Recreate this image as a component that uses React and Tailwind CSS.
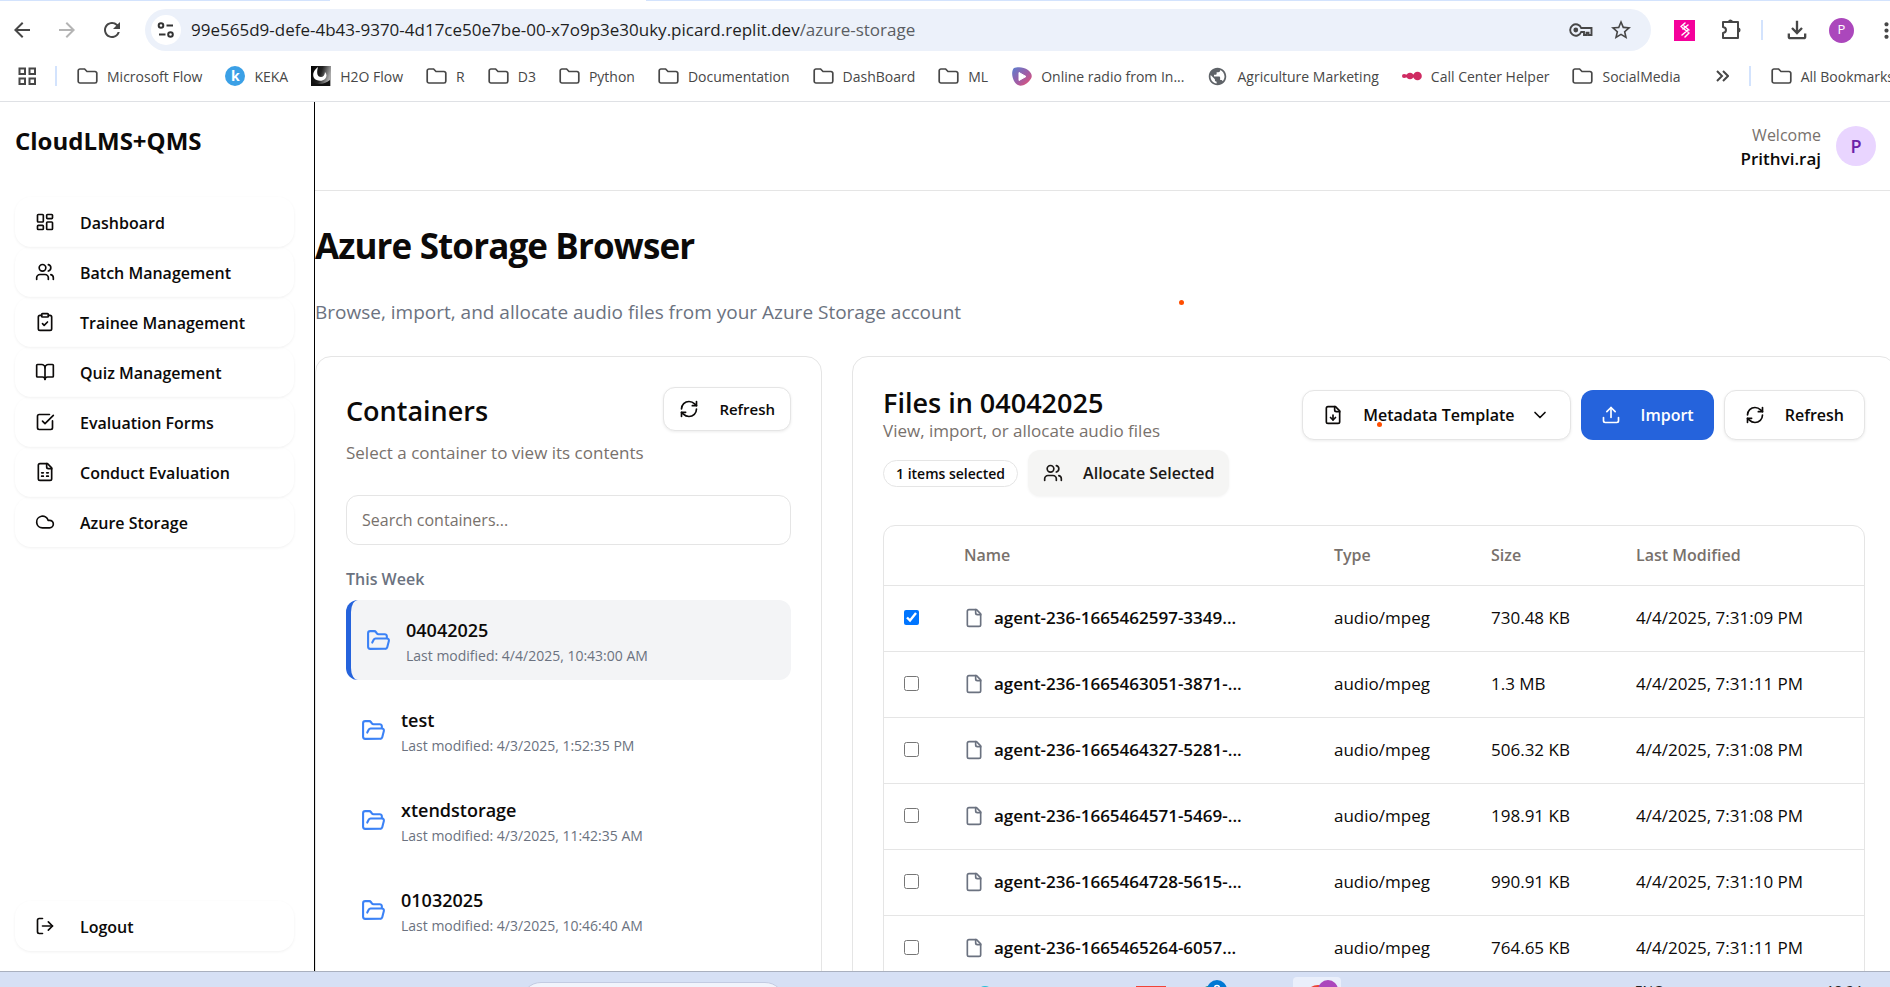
import React, { useState } from "react";
import {
  BookOpen,
  ChevronDown,
  ClipboardCheck,
  Cloud,
  FolderOpen,
  LayoutDashboard,
  LogOut,
  RefreshCw,
  SquareCheckBig,
  Upload,
  Users,
} from "lucide-react";
import {
  MdArrowBack,
  MdArrowForward,
  MdMoreVert,
  MdOutlineExtension,
  MdOutlineFileDownload,
  MdPublic,
  MdRefresh,
  MdStarBorder,
} from "react-icons/md";

/* ---------- icons ---------- */

function LineIcon({ size = 20, className = "", children }) {
  return (
    <svg
      width={size}
      height={size}
      viewBox="0 0 24 24"
      fill="none"
      stroke="currentColor"
      strokeWidth="2"
      strokeLinecap="round"
      strokeLinejoin="round"
      className={`shrink-0 ${className}`}
      aria-hidden="true"
    >
      {children}
    </svg>
  );
}

function FileIcon(props) {
  return (
    <LineIcon {...props}>
      <path d="M15 2H6a2 2 0 0 0-2 2v16a2 2 0 0 0 2 2h12a2 2 0 0 0 2-2V7Z" />
      <path d="M14 2v4a2 2 0 0 0 2 2h4" />
    </LineIcon>
  );
}

function FileDownIcon(props) {
  return (
    <LineIcon {...props}>
      <path d="M15 2H6a2 2 0 0 0-2 2v16a2 2 0 0 0 2 2h12a2 2 0 0 0 2-2V7Z" />
      <path d="M14 2v4a2 2 0 0 0 2 2h4" />
      <path d="M12 18v-6" />
      <path d="m9 15 3 3 3-3" />
    </LineIcon>
  );
}

function FileSheetIcon(props) {
  return (
    <LineIcon {...props}>
      <path d="M15 2H6a2 2 0 0 0-2 2v16a2 2 0 0 0 2 2h12a2 2 0 0 0 2-2V7Z" />
      <path d="M14 2v4a2 2 0 0 0 2 2h4" />
      <path d="M8 13h2M14 13h2M8 17h2M14 17h2" />
    </LineIcon>
  );
}

function BookmarkFolder() {
  return (
    <svg width="21" height="18" viewBox="0 0 21 18" fill="none" className="shrink-0" aria-hidden="true">
      <path
        d="M3 2h4.6l2.4 2.5H18a1.8 1.8 0 0 1 1.8 1.8v8A1.8 1.8 0 0 1 18 16H3a1.8 1.8 0 0 1-1.8-1.8V3.8A1.8 1.8 0 0 1 3 2Z"
        stroke="#474747"
        strokeWidth="1.7"
      />
    </svg>
  );
}

function KekaIcon() {
  return (
    <span className="flex size-5 shrink-0 items-center justify-center rounded-full bg-[#3ba0e6] text-[14px] leading-none font-bold text-white">
      k
    </span>
  );
}

function H2OIcon() {
  return (
    <svg width="20" height="20" viewBox="0 0 20 20" className="shrink-0" aria-hidden="true">
      <defs>
        <linearGradient id="h2o" x1="0" x2="1" y1="0" y2="0.3">
          <stop offset="0" stopColor="#000" />
          <stop offset="0.55" stopColor="#222" />
          <stop offset="1" stopColor="#aaa" />
        </linearGradient>
      </defs>
      <rect width="20" height="20" fill="url(#h2o)" />
      <path d="M7 1C3 4 1 8 3 12c2 3 8 4 11 1 2-2 2-5 0-7 0 3-2 5-4 5-3 0-5-3-3-10Z" fill="#fff" />
      <path d="M1 16c5 3 12 3 18-2v6H1Z" fill="#111" />
    </svg>
  );
}

function RadioIcon() {
  return (
    <svg width="21" height="19" viewBox="0 0 21 19" className="shrink-0" aria-hidden="true">
      <defs>
        <linearGradient id="radio" x1="0" x2="1" y1="0" y2="1">
          <stop offset="0" stopColor="#5a7fd0" />
          <stop offset="0.55" stopColor="#a25ca4" />
          <stop offset="1" stopColor="#f0506e" />
        </linearGradient>
      </defs>
      <path d="M3 1c5-1.500 10-.8 14 2 4 3 5 7 2 10-3 4-8 7-12 5C2 16-1 5 3 1Z" fill="url(#radio)" />
      <path d="M8 5.500v8l7-4Z" fill="#fff" stroke="#fff" strokeWidth="1" strokeLinejoin="round" />
    </svg>
  );
}

function CallCenterIcon() {
  return (
    <svg width="20" height="10" viewBox="0 0 20 10" className="shrink-0" aria-hidden="true">
      <path d="M2 5h14" stroke="#cf2b62" strokeWidth="3" />
      <circle cx="2" cy="5" r="2" fill="#cf2b62" />
      <circle cx="8" cy="5" r="3.200" fill="#cf2b62" />
      <circle cx="15.500" cy="5" r="4.300" fill="#cf2b62" />
    </svg>
  );
}

function AppsIcon() {
  return (
    <svg width="19" height="19" viewBox="0 0 19 19" fill="none" stroke="#474747" strokeWidth="2" className="shrink-0" aria-hidden="true">
      <rect x="1.500" y="1.500" width="5.500" height="5.500" />
      <rect x="11.500" y="1.500" width="5.500" height="5.500" />
      <rect x="1.500" y="11.500" width="5.500" height="5.500" />
      <rect x="11.500" y="11.500" width="5.500" height="5.500" />
    </svg>
  );
}

function TuneIcon() {
  return (
    <svg width="18" height="16" viewBox="0 0 18 16" fill="none" stroke="#333" strokeWidth="2" aria-hidden="true">
      <circle cx="4" cy="3.500" r="2.300" />
      <path d="M9.500 3.500H16" />
      <circle cx="13.500" cy="12.500" r="2.300" />
      <path d="M2 12.500h6.500" />
    </svg>
  );
}

function KeyIcon() {
  return (
    <svg width="24" height="14" viewBox="0 0 24 14" fill="none" stroke="#474747" strokeWidth="1.900" aria-hidden="true">
      <path d="M12.200 5A5.700 5.700 0 1 0 12.200 9H15v3h2.500V9.800h2V12h3V5Z" />
      <circle cx="6.800" cy="7" r="2.400" fill="#474747" stroke="none" />
    </svg>
  );
}

function PuzzleIcon() {
  return (
    <svg width="24" height="24" viewBox="0 0 24 24" fill="none" stroke="#474747" strokeWidth="2" strokeLinejoin="round" aria-hidden="true">
      <path d="M4 4h15v16H4v-5c4-.5 4-5.500 0-6Z" />
      <path d="M9 4a2.500 2.500 0 0 1 5 0ZM19 9.500a2.500 2.500 0 0 1 0 5Z" fill="#474747" stroke="none" />
    </svg>
  );
}

/* ---------- browser chrome ---------- */

const bookmarks = [
  { label: "Microsoft Flow" },
  { label: "KEKA", icon: <KekaIcon /> },
  { label: "H2O Flow", icon: <H2OIcon /> },
  { label: "R" },
  { label: "D3" },
  { label: "Python" },
  { label: "Documentation" },
  { label: "DashBoard" },
  { label: "ML" },
  { label: "Online radio from In...", icon: <RadioIcon /> },
  { label: "Agriculture Marketing", icon: <MdPublic size={21} className="shrink-0 text-[#5f6368]" /> },
  { label: "Call Center Helper", icon: <CallCenterIcon /> },
  { label: "SocialMedia" },
];

function Bookmark({ label, icon }) {
  return (
    <a href="#" className="flex shrink-0 items-center gap-[9px] whitespace-nowrap">
      {icon || <BookmarkFolder />}
      {label}
    </a>
  );
}

function BrowserChrome() {
  return (
    <header className="shrink-0 overflow-hidden border-b border-[#dfe1e5] bg-white text-[#474747]">
      <div className="flex h-px">
        <div className="w-[330px] bg-[#d3e3fd]" />
        <div className="w-[316px]" />
        <div className="flex-1 bg-[#d3e3fd]" />
      </div>
      <div className="-mr-[9px] flex items-center pt-2 pl-[10px]">
        <div className="flex items-center gap-[21px]">
          <button type="button" aria-label="Back"><MdArrowBack size={24} /></button>
          <button type="button" aria-label="Forward" className="text-[#b4b4b4]"><MdArrowForward size={24} /></button>
          <button type="button" aria-label="Reload"><MdRefresh size={24} /></button>
        </div>
        <div className="ml-[21px] flex h-[42px] flex-1 items-center rounded-full bg-[#ecf1fa] pr-[18px] pl-[6px]">
          <button type="button" aria-label="Site information" className="flex size-[30px] items-center justify-center rounded-full bg-white">
            <TuneIcon />
          </button>
          <div className="ml-[10px] flex-1 text-[17px] whitespace-nowrap">
            <span className="text-[#1f1f1f]">99e565d9-defe-4b43-9370-4d17ce50e7be-00-x7o9p3e30uky.picard.replit.dev</span>
            <span className="text-[#5a5d63]">/azure-storage</span>
          </div>
          <div className="flex items-center gap-4">
            <button type="button" aria-label="Passwords"><KeyIcon /></button>
            <button type="button" aria-label="Bookmark this page"><MdStarBorder size={24} /></button>
          </div>
        </div>
        <div className="flex items-center pl-[23px]">
          <button type="button" aria-label="Extension" className="flex size-[21px] items-center justify-center bg-[#f5009b]">
            <svg width="14" height="18" viewBox="0 0 14 18" fill="none" stroke="#fff" strokeWidth="1.500" strokeLinecap="round" aria-hidden="true">
              <path d="M3 5.500 7 2M5 8 10 4M4 6.500l6 4.500M6 5l5 4M4 14l6-5M7 16l4-4" />
            </svg>
          </button>
          <button type="button" aria-label="Extensions" className="ml-6"><PuzzleIcon /></button>
          <div className="ml-[18px] h-5 w-0.5 bg-[#d3e3fd]" />
          <button type="button" aria-label="Downloads" className="ml-5"><MdOutlineFileDownload size={28} /></button>
          <button type="button" aria-label="Profile" className="ml-[18px] flex size-[25px] items-center justify-center rounded-full bg-[#ab47bc] text-[13px] text-white">
            P
          </button>
          <button type="button" aria-label="Menu" className="ml-5"><MdMoreVert size={25} /></button>
        </div>
      </div>
      <nav className="-mr-1 flex h-[50px] items-center pl-[18px] text-[14px]">
        <button type="button" aria-label="Apps"><AppsIcon /></button>
        <div className="mr-5 ml-[18px] h-5 w-0.5 shrink-0 bg-[#d3e3fd]" />
        <div className="flex items-center gap-[23px]">
          {bookmarks.map((b) => (
            <Bookmark key={b.label} {...b} />
          ))}
        </div>
        <button type="button" aria-label="More bookmarks" className="ml-auto">
          <svg width="13" height="12" viewBox="0 0 13 12" fill="none" stroke="#474747" strokeWidth="2" aria-hidden="true">
            <path d="m1 1 5 5-5 5M7 1l5 5-5 5" />
          </svg>
        </button>
        <div className="mx-5 h-5 w-0.5 shrink-0 bg-[#d3e3fd]" />
        <Bookmark label="All Bookmarks" />
      </nav>
    </header>
  );
}

/* ---------- sidebar ---------- */

const navItems = [
  { label: "Dashboard", Icon: LayoutDashboard },
  { label: "Batch Management", Icon: Users },
  { label: "Trainee Management", Icon: ClipboardCheck },
  { label: "Quiz Management", Icon: BookOpen },
  { label: "Evaluation Forms", Icon: SquareCheckBig },
  { label: "Conduct Evaluation", Icon: FileSheetIcon },
  { label: "Azure Storage", Icon: Cloud },
];

const navClass =
  "flex h-[50px] w-full items-center gap-[25px] rounded-2xl px-5 text-[16px] font-semibold shadow-[0_1px_3px_rgba(0,0,0,0.06)]";

function Sidebar() {
  return (
    <aside className="flex w-[315px] shrink-0 flex-col border-r border-black pt-6 pr-5 pb-5 pl-[15px]">
      <div className="text-[24px] leading-[30px] font-bold">CloudLMS+QMS</div>
      <nav className="mt-[41px]">
        {navItems.map(({ label, Icon }) => (
          <a key={label} href="#" className={navClass}>
            <Icon size={20} />
            <span className="pt-0.5">{label}</span>
          </a>
        ))}
      </nav>
      <button type="button" className={`mt-auto ${navClass}`}>
        <LogOut size={20} />
        <span className="pt-0.5">Logout</span>
      </button>
    </aside>
  );
}

/* ---------- containers ---------- */

const containers = [
  { name: "04042025", modified: "4/4/2025, 10:43:00 AM" },
  { name: "test", modified: "4/3/2025, 1:52:35 PM" },
  { name: "xtendstorage", modified: "4/3/2025, 11:42:35 AM" },
  { name: "01032025", modified: "4/3/2025, 10:46:40 AM" },
];

const outlineButton =
  "flex items-center rounded-xl border border-[#e5e5e5] bg-white font-semibold shadow-[0_1px_3px_rgba(0,0,0,0.08)]";

function ContainersCard() {
  const [active, setActive] = useState("04042025");
  return (
    <section className="w-[507px] shrink-0 rounded-2xl border border-[#e5e5e5] bg-white p-[30px]">
      <div className="flex items-start justify-between">
        <h2 className="text-[27px] leading-[48px] font-semibold">Containers</h2>
        <button type="button" className={`${outlineButton} h-11 gap-5 px-[15px] text-[15px]`}>
          <RefreshCw size={20} />
          Refresh
        </button>
      </div>
      <p className="mt-1 text-[17px] leading-7 text-[#78716c]">Select a container to view its contents</p>
      <input
        type="text"
        aria-label="Search containers"
        placeholder="Search containers..."
        className="mt-7 h-[50px] w-full rounded-xl border border-[#e5e5e5] px-[15px] text-[16px] placeholder:text-[#78716c]"
      />
      <h3 className="mt-5 text-[16px] leading-7 font-semibold text-[#6b7280]">This Week</h3>
      <div className="mt-[7px] flex flex-col gap-[10px]">
        {containers.map((c) => (
          <button
            key={c.name}
            type="button"
            onClick={() => setActive(c.name)}
            className={
              c.name === active
                ? "flex h-20 items-center gap-[15px] rounded-xl border-l-[5px] border-[#2563dc] bg-[#f3f4f6] px-[15px] text-left"
                : "flex h-20 items-center gap-[15px] rounded-xl px-[15px] text-left"
            }
          >
            <FolderOpen size={25} className="shrink-0 text-[#3b82f6]" />
            <span className="pt-1">
              <span className="block text-[18px] leading-7 font-semibold">{c.name}</span>
              <span className="block text-[14px] leading-6 text-[#6b7280]">Last modified: {c.modified}</span>
            </span>
          </button>
        ))}
      </div>
    </section>
  );
}

/* ---------- files ---------- */

const files = [
  { name: "agent-236-1665462597-3349...", size: "730.48 KB", modified: "4/4/2025, 7:31:09 PM" },
  { name: "agent-236-1665463051-3871-...", size: "1.3 MB", modified: "4/4/2025, 7:31:11 PM" },
  { name: "agent-236-1665464327-5281-...", size: "506.32 KB", modified: "4/4/2025, 7:31:08 PM" },
  { name: "agent-236-1665464571-5469-...", size: "198.91 KB", modified: "4/4/2025, 7:31:08 PM" },
  { name: "agent-236-1665464728-5615-...", size: "990.91 KB", modified: "4/4/2025, 7:31:10 PM" },
  { name: "agent-236-1665465264-6057...", size: "764.65 KB", modified: "4/4/2025, 7:31:11 PM" },
];

function FilesTable() {
  return (
    <div className="mt-[29px] overflow-hidden rounded-xl border border-[#e5e5e5]">
      <table className="w-full table-fixed text-left text-[17px]">
        <colgroup>
          <col className="w-[60px]" />
          <col className="w-[370px]" />
          <col className="w-[157px]" />
          <col className="w-[145px]" />
          <col />
        </colgroup>
        <thead>
          <tr className="h-[59px] border-b border-[#e5e5e5] text-[16px] text-[#78716c]">
            <th aria-label="Selected" />
            <th className="px-5 font-semibold">Name</th>
            <th className="px-5 font-semibold">Type</th>
            <th className="px-5 font-semibold">Size</th>
            <th className="px-5 font-semibold">Last Modified</th>
          </tr>
        </thead>
        <tbody>
          {files.map((f, i) => (
            <tr key={f.name} className="h-[66px] border-b border-[#e5e5e5]">
              <td className="px-5 pb-0.5">
                <input type="checkbox" defaultChecked={i === 0} aria-label={`Select ${f.name}`} className="block size-[15px]" />
              </td>
              <td className="px-5">
                <span className="flex items-center gap-[10px] font-semibold whitespace-nowrap">
                  <FileIcon className="text-[#6b7280]" />
                  {f.name}
                </span>
              </td>
              <td className="px-5">audio/mpeg</td>
              <td className="px-5 whitespace-nowrap">{f.size}</td>
              <td className="px-5 whitespace-nowrap">{f.modified}</td>
            </tr>
          ))}
        </tbody>
      </table>
    </div>
  );
}

function FilesCard() {
  return (
    <section className="-mr-[6px] min-w-0 flex-1 rounded-2xl border border-[#e5e5e5] bg-white p-[30px]">
      <div className="flex items-center justify-between">
        <div>
          <h2 className="text-[27px] leading-8 font-semibold">Files in 04042025</h2>
          <p className="text-[17px] leading-6 text-[#78716c]">View, import, or allocate audio files</p>
        </div>
        <div className="flex gap-[10px] text-[16px]">
          <button type="button" className={`${outlineButton} relative h-[50px] px-5`}>
            <FileDownIcon />
            <span className="ml-5">Metadata Template</span>
            <ChevronDown size={20} className="ml-[15px]" />
            <span className="absolute top-[31px] left-[74px] size-[5px] rounded-full bg-[#ff4d00]" />
          </button>
          <button type="button" className="flex h-[50px] items-center gap-5 rounded-xl bg-[#2563dc] px-5 font-semibold text-white">
            <Upload size={20} />
            Import
          </button>
          <button type="button" className={`${outlineButton} h-[50px] gap-5 px-5`}>
            <RefreshCw size={20} />
            Refresh
          </button>
        </div>
      </div>
      <div className="mt-[7px] flex items-center gap-[10px]">
        <span className="flex h-[27px] items-center rounded-full border border-[#e5e5e5] px-3 text-[14px] font-semibold">
          1 items selected
        </span>
        <button type="button" className="flex h-[46px] items-center gap-5 rounded-xl bg-[#f5f5f4] px-[15px] text-[16px] font-semibold text-[#1c1917] shadow-[0_1px_3px_rgba(0,0,0,0.05)]">
          <Users size={20} />
          Allocate Selected
        </button>
      </div>
      <FilesTable />
    </section>
  );
}

/* ---------- taskbar ---------- */

function Taskbar() {
  return (
    <footer className="flex h-4 shrink-0 items-start overflow-hidden border-t border-[#a9b0bf] bg-[#d6e0f5] text-[14px] leading-none text-[#222]">
      <div className="mt-[10px] ml-[521px] h-10 w-[264px] shrink-0 rounded-full border border-[#c3cbe2] bg-[#f1f4fc]" />
      <svg width="380" height="15" viewBox="0 0 380 15" className="ml-[185px] shrink-0" aria-hidden="true">
        <circle cx="15" cy="22" r="8" fill="#26c0d8" />
        <rect x="166" y="14" width="30" height="10" fill="#f04438" />
        <circle cx="239" cy="22" r="8" fill="#0f8a5f" />
        <circle cx="247" cy="18" r="10" fill="#0078d4" />
        <circle cx="247" cy="16" r="2.500" fill="none" stroke="#fff" strokeWidth="1.500" />
        <rect x="323" y="5" width="48" height="40" rx="4" fill="#eaeffb" />
        <circle cx="348" cy="26" r="13" fill="#ea4335" />
        <circle cx="358" cy="18" r="10" fill="#ab47bc" />
      </svg>
      <span className="mt-3 ml-auto">ENG</span>
      <span className="mt-3 mr-7 ml-[163px]">18:24</span>
    </footer>
  );
}

/* ---------- page ---------- */

export default function App() {
  return (
    <div className="flex h-screen flex-col overflow-hidden bg-white font-['Segoe_UI','Open_Sans',sans-serif] text-[#0c0a09]">
      <BrowserChrome />
      <div className="flex min-h-0 flex-1 overflow-hidden">
        <Sidebar />
        <main className="min-w-0 flex-1 overflow-hidden">
          <div className="flex h-[89px] items-center justify-end gap-[15px] border-b border-[#e5e5e5] pr-[14px]">
            <div className="pt-0.5 text-right">
              <div className="text-[16px] leading-6 text-[#78716c]">Welcome</div>
              <div className="text-[17px] leading-6 font-semibold">Prithvi.raj</div>
            </div>
            <div className="flex size-10 items-center justify-center rounded-full bg-[#e9d5ff] text-[18px] font-semibold text-[#6b21a8]">
              P
            </div>
          </div>
          <div className="relative pt-[35px]">
            <h1 className="text-[35px] leading-10 font-bold tracking-tight">Azure Storage Browser</h1>
            <p className="mt-[31px] text-[19px] leading-[30px] text-[#6b7280]">
              Browse, import, and allocate audio files from your Azure Storage account
            </p>
            <span className="absolute top-[109px] left-[864px] size-[5px] rounded-full bg-[#ff4d00]" />
            <div className="mt-[29px] flex gap-[30px]">
              <ContainersCard />
              <FilesCard />
            </div>
          </div>
        </main>
      </div>
      <Taskbar />
    </div>
  );
}
